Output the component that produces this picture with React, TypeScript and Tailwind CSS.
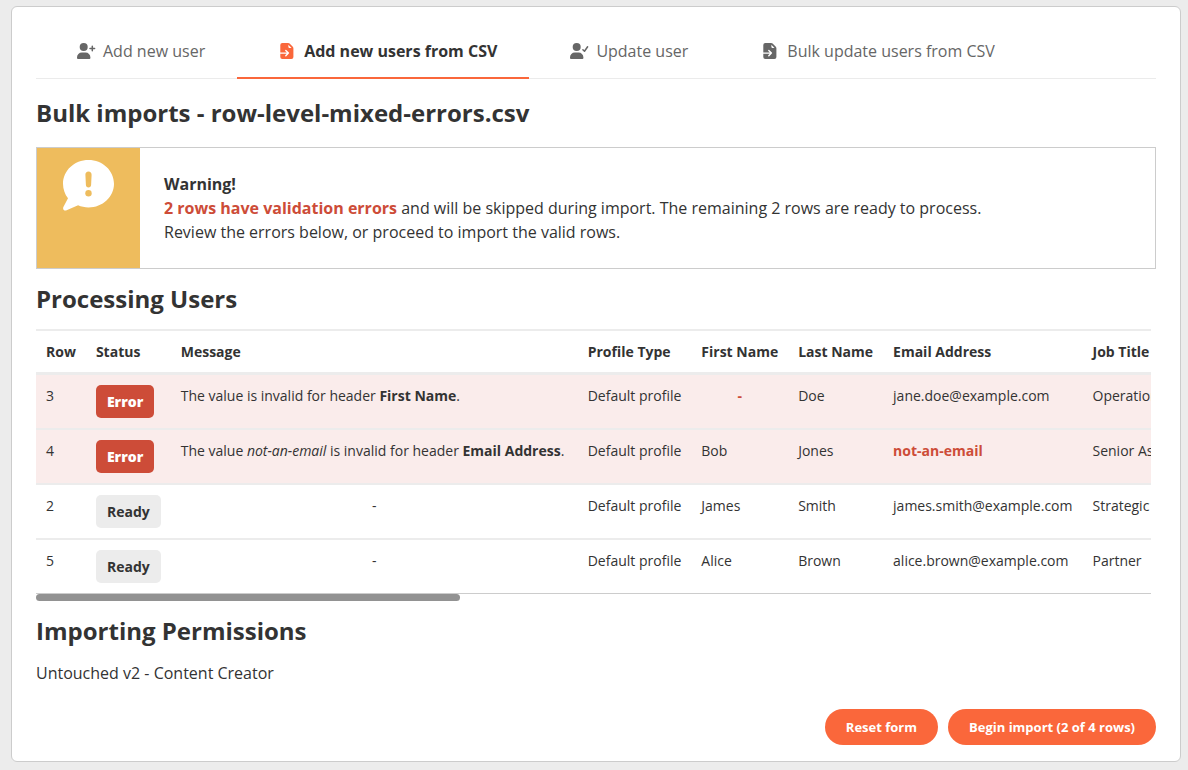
import clsx from "clsx";
import { useState, type ReactNode, type UIEvent } from "react";

interface IconProps {
  className?: string;
}

interface ImportRow {
  row: number;
  message: ReactNode | null;
  profileType: string;
  firstName: string | null;
  lastName: string;
  email: string;
  jobTitle: string;
  invalid?: "firstName" | "email";
}

function UserPlusIcon({ className }: IconProps) {
  return (
    <svg viewBox="0 0 20 16" fill="currentColor" className={className} aria-hidden="true">
      <circle cx="7.7" cy="4" r="4" />
      <path d="M1 15v-.6a4.8 4.8 0 0 1 4.8-4.8h3.8a4.8 4.8 0 0 1 4.8 4.8v.6a1 1 0 0 1-1 1H2a1 1 0 0 1-1-1z" />
      <path d="M16.3 3.2v4.6M14 5.500h4.600" fill="none" stroke="currentColor" strokeWidth="1.500" strokeLinecap="round" />
    </svg>
  );
}

function UserCheckIcon({ className }: IconProps) {
  return (
    <svg viewBox="0 0 20 16" fill="currentColor" className={className} aria-hidden="true">
      <circle cx="7.7" cy="4" r="4" />
      <path d="M1 15v-.6a4.8 4.8 0 0 1 4.8-4.8h3.8a4.8 4.8 0 0 1 4.8 4.8v.6a1 1 0 0 1-1 1H2a1 1 0 0 1-1-1z" />
      <path d="M13.900 6.700l1.600 1.600 3.100-4.500" fill="none" stroke="currentColor" strokeWidth="1.500" strokeLinecap="round" strokeLinejoin="round" />
    </svg>
  );
}

function FileImportIcon({ className }: IconProps) {
  return (
    <svg viewBox="0 0 20 16" className={className} aria-hidden="true">
      <path d="M5.300 0h5.900a2 2 0 0 1 1.400.6l3.200 3.200a2 2 0 0 1 .6 1.400V14a2 2 0 0 1-2 2H5.300a2 2 0 0 1-2-2V2a2 2 0 0 1 2-2z" fill="currentColor" />
      <path d="M11.400 1.800v2.300a.8.8 0 0 0 .8.8h2.300z" fill="#fff" />
      <path d="M3 10.100h8M8.800 7.500l2.600 2.600-2.600 2.600" fill="none" stroke="#fff" strokeWidth="1.400" strokeLinecap="round" strokeLinejoin="round" />
    </svg>
  );
}

function WarningBubbleIcon({ className }: IconProps) {
  return (
    <svg viewBox="0 0 51 51" className={className} aria-hidden="true">
      <path
        d="M25.5 0C39.6 0 51 10.6 51 23.7S39.6 47.4 25.5 47.4c-3.8 0-7.3-.8-10.4-2.1L3.6 50.3C1.200 51.3-.8 49 .5 46.7L5 38.3C1.900 34.3 0 29.2 0 23.7 0 10.6 11.4 0 25.5 0z"
        fill="#fff"
      />
      <path d="M25.5 11.5c1.900 0 3.200 1.300 3.100 3.200l-.5 10.300c-.1 1.600-1 2.500-2.600 2.500s-2.500-.9-2.600-2.500l-.5-10.300c-.1-1.900 1.200-3.200 3.100-3.200z" fill="#eebc5d" />
      <circle cx="25.5" cy="33.300" r="3.200" fill="#eebc5d" />
    </svg>
  );
}

const tabs = [
  { label: "Add new user", Icon: UserPlusIcon },
  { label: "Add new users from CSV", Icon: FileImportIcon },
  { label: "Update user", Icon: UserCheckIcon },
  { label: "Bulk update users from CSV", Icon: FileImportIcon },
];

const columns = ["Row", "Status", "Message", "Profile Type", "First Name", "Last Name", "Email Address", "Job Title"];

const rows: ImportRow[] = [
  {
    row: 3,
    message: (
      <>
        The value is invalid for header <strong>First Name</strong>.
      </>
    ),
    profileType: "Default profile",
    firstName: null,
    lastName: "Doe",
    email: "jane.doe@example.com",
    jobTitle: "Operations Manager",
    invalid: "firstName",
  },
  {
    row: 4,
    message: (
      <>
        The value <em>not-an-email</em> is invalid for header <strong>Email Address</strong>.
      </>
    ),
    profileType: "Default profile",
    firstName: "Bob",
    lastName: "Jones",
    email: "not-an-email",
    jobTitle: "Senior Associate",
    invalid: "email",
  },
  {
    row: 2,
    message: null,
    profileType: "Default profile",
    firstName: "James",
    lastName: "Smith",
    email: "james.smith@example.com",
    jobTitle: "Strategic Advisor",
  },
  {
    row: 5,
    message: null,
    profileType: "Default profile",
    firstName: "Alice",
    lastName: "Brown",
    email: "alice.brown@example.com",
    jobTitle: "Partner",
  },
];

function Tabs() {
  const [active, setActive] = useState(1);

  return (
    <div role="tablist" className="flex border-b border-[#ebebeb]">
      {tabs.map(({ label, Icon }, index) => {
        const selected = index === active;

        return (
          <button
            key={label}
            type="button"
            role="tab"
            aria-selected={selected}
            onClick={() => setActive(index)}
            className={clsx(
              "-mb-px flex items-center gap-[7px] border-b-2 pt-4 pr-8 pb-3.5 pl-10 leading-6",
              selected ? "border-[#fa673b] font-bold text-[#333333]" : "border-transparent text-[#666666]",
            )}
          >
            <Icon className={clsx("h-4 w-5", selected && "text-[#fa673b]")} />
            {label}
          </button>
        );
      })}
    </div>
  );
}

function Warning() {
  return (
    <div role="alert" className="flex border border-[#cccccc]">
      <div className="flex w-[103px] shrink-0 justify-center bg-[#eebc5d] pt-3">
        <WarningBubbleIcon className="h-[51px] w-[51px]" />
      </div>
      <div className="p-6 leading-6">
        <p className="font-bold">Warning!</p>
        <p>
          <strong className="text-[#cd4c38]">2 rows have validation errors</strong> and will be skipped during import. The
          remaining 2 rows are ready to process.
        </p>
        <p>Review the errors below, or proceed to import the valid rows.</p>
      </div>
    </div>
  );
}

function StatusBadge({ error }: { error: boolean }) {
  return (
    <span
      className={clsx(
        "inline-block rounded-[5px] px-[11px] py-1.5 align-top",
        error ? "bg-[#cd4c38] font-extrabold text-white" : "bg-[#ececec] font-bold",
      )}
    >
      {error ? "Error" : "Ready"}
    </span>
  );
}

function ImportTable() {
  const [offset, setOffset] = useState(0);

  const handleScroll = (event: UIEvent<HTMLDivElement>) => {
    const { scrollLeft, scrollWidth } = event.currentTarget;
    setOffset((scrollLeft / scrollWidth) * 100);
  };

  return (
    <div className="mr-[5px]">
      <div onScroll={handleScroll} className="overflow-x-auto [scrollbar-width:none]">
        <table className="w-[2926px] border-separate border-spacing-0 text-left text-sm leading-[21px] whitespace-nowrap">
          <thead>
            <tr>
              {columns.map((column) => (
                <th
                  key={column}
                  scope="col"
                  className={clsx(
                    "border-t-2 border-b-3 border-[#ececec] p-2.5 font-bold last:w-auto",
                    column === "Message" ? "w-[407px]" : "w-px",
                  )}
                >
                  {column}
                </th>
              ))}
            </tr>
          </thead>
          <tbody>
            {rows.map((item) => (
              <tr
                key={item.row}
                className={clsx(
                  "align-top *:border-b-2 *:border-[#ececec] *:p-2.5 last:*:border-b last:*:border-[#cccccc]",
                  item.invalid && "bg-[#faeceb]",
                )}
              >
                <td>{item.row}</td>
                <td>
                  <StatusBadge error={Boolean(item.invalid)} />
                </td>
                <td className={clsx(!item.message && "text-center")}>{item.message ?? "-"}</td>
                <td>{item.profileType}</td>
                <td
                  className={clsx(
                    !item.firstName && "text-center",
                    item.invalid === "firstName" && "font-bold text-[#cd4c38]",
                  )}
                >
                  {item.firstName ?? "-"}
                </td>
                <td>{item.lastName}</td>
                <td className={clsx(item.invalid === "email" && "font-bold text-[#cd4c38]")}>{item.email}</td>
                <td>{item.jobTitle}</td>
              </tr>
            ))}
          </tbody>
        </table>
      </div>
      <div className="h-[7px] overflow-hidden">
        <div className="h-full w-[38%] rounded-full bg-[#929292]" style={{ marginLeft: `${offset}%` }} />
      </div>
    </div>
  );
}

export default function App() {
  return (
    <div className="min-h-screen bg-[#ececec] pt-1.5 pr-[7px] pb-2 pl-[11px] font-['Open_Sans',sans-serif] text-base text-[#333333]">
      <main className="rounded-md border border-[#cccccc] bg-white px-6 pt-4 pb-4">
        <Tabs />

        <h1 className="mt-[18px] mb-[18px] text-2xl leading-8 font-bold">Bulk imports - row-level-mixed-errors.csv</h1>
        <Warning />

        <h2 className="mt-3.5 mb-3.5 text-2xl leading-8 font-bold">Processing Users</h2>
        <ImportTable />

        <h2 className="mt-3.5 mb-3.5 text-2xl leading-8 font-bold">Importing Permissions</h2>
        <p className="leading-6">Untouched v2 - Content Creator</p>

        <div className="mt-6 flex justify-end gap-2.5 text-[13px] leading-5 font-bold text-white">
          <button type="button" className="rounded-full bg-[#fa673b] px-[21px] py-2">
            Reset form
          </button>
          <button type="button" className="rounded-full bg-[#fa673b] px-[21px] py-2">
            Begin import (2 of 4 rows)
          </button>
        </div>
      </main>
    </div>
  );
}
